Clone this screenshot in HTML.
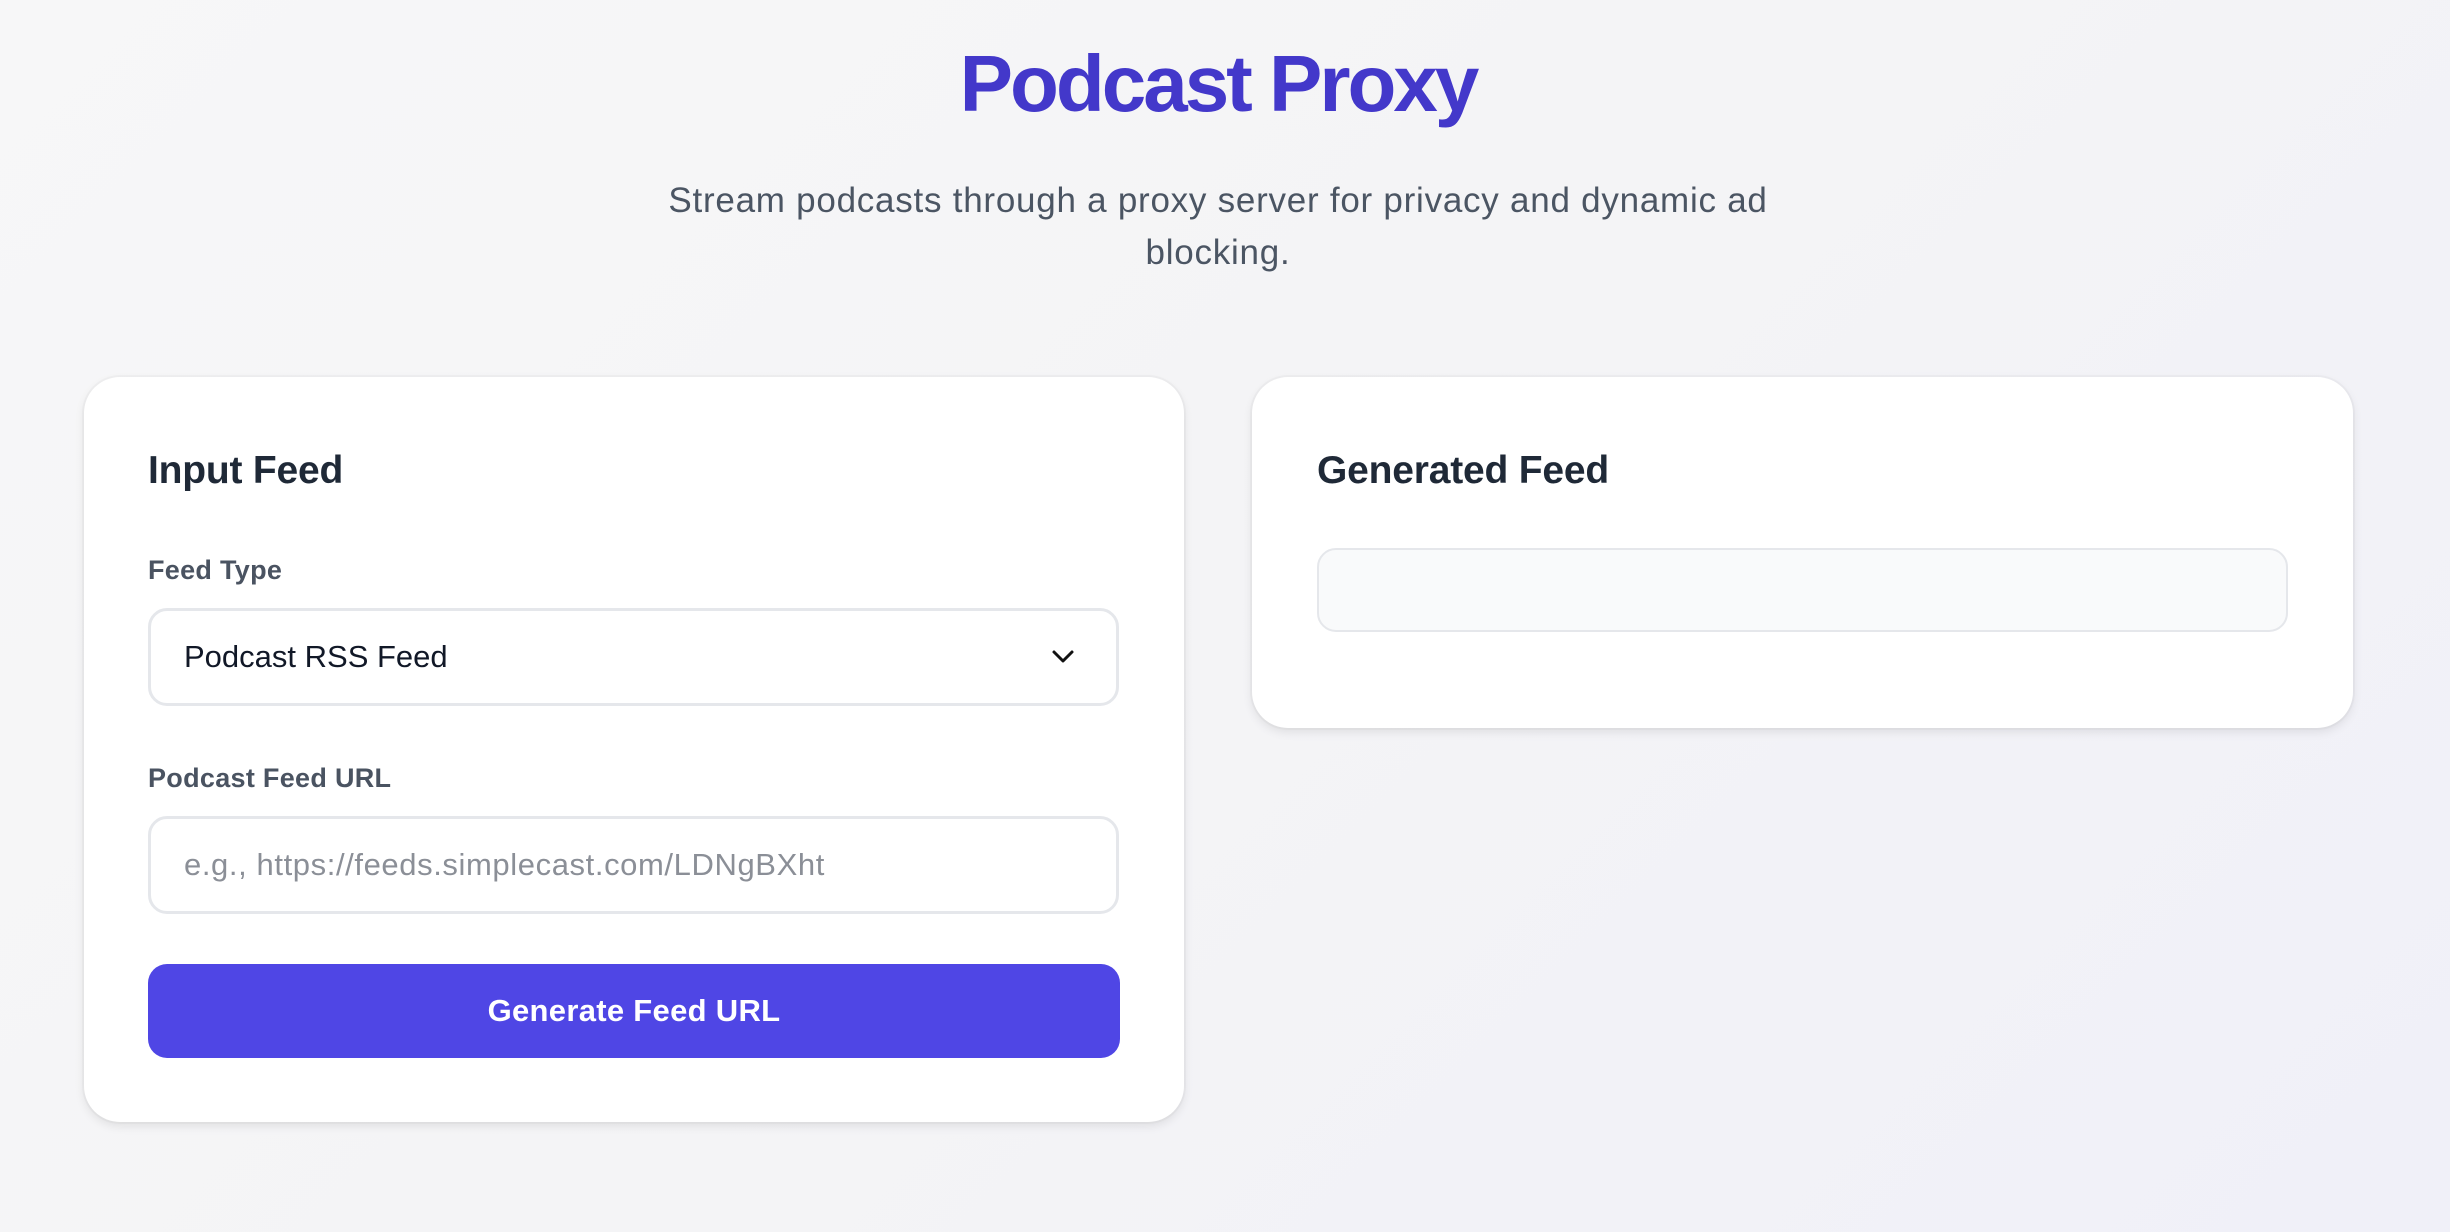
<!DOCTYPE html>
<html><head><meta charset="utf-8"><style>
*{box-sizing:border-box;margin:0;padding:0}
html,body{width:2450px;height:1232px;overflow:hidden}
body{font-family:"Liberation Sans",sans-serif;background:linear-gradient(135deg,#f7f7f8 0%,#f4f4f6 50%,#f0f0f8 100%);position:relative}
h1{position:absolute;left:-7px;width:2450px;top:37px;text-align:center;font-size:80px;font-weight:700;color:#4338ca;letter-spacing:-3px;line-height:94px}
.sub{position:absolute;left:-7px;width:2450px;top:175px;text-align:center;font-size:35px;line-height:52px;color:#4b5563;letter-spacing:0.75px}
.card{position:absolute;background:#fff;border-radius:36px;box-shadow:0 4px 10px rgba(0,0,0,.09),0 0 0 2px rgba(0,0,0,.025)}
.t{position:absolute;font-size:39px;font-weight:700;color:#1f2937;letter-spacing:-0.2px}
.lbl{position:absolute;font-size:27px;font-weight:700;color:#374151;opacity:.9;letter-spacing:0.3px}
.box{position:absolute;border:3px solid #e5e7eb;border-radius:19px;background:#fff;font-size:31px;color:#111827;padding-left:33px;display:flex;align-items:center}
.btn{position:absolute;background:#4f46e5;border-radius:19px;color:#fff;font-size:31px;font-weight:700;display:flex;align-items:center;justify-content:center;letter-spacing:0.3px}
</style></head><body>
<h1>Podcast Proxy</h1>
<div class="sub">Stream podcasts through a proxy server for privacy and dynamic ad<br>blocking.</div>

<div class="card" style="left:84px;top:377px;width:1100px;height:745px"></div>
<div class="t" style="left:148px;top:449px">Input Feed</div>
<div class="lbl" style="left:148px;top:555px">Feed Type</div>
<div class="box" style="left:148px;top:608px;width:971px;height:98px">Podcast RSS Feed
<svg style="position:absolute;left:900px;top:38px" width="24" height="16" viewBox="0 0 24 16"><path d="M3 3l9 9 9-9" fill="none" stroke="#111" stroke-width="3" stroke-linecap="round" stroke-linejoin="round"/></svg></div>
<div class="lbl" style="left:148px;top:763px">Podcast Feed URL</div>
<div class="box" style="left:148px;top:816px;width:971px;height:98px;color:#8b8f97;letter-spacing:0.6px">e.g., https://feeds.simplecast.com/LDNgBXht</div>
<div class="btn" style="left:148px;top:964px;width:972px;height:94px">Generate Feed URL</div>

<div class="card" style="left:1252px;top:377px;width:1101px;height:351px"></div>
<div class="t" style="left:1317px;top:449px">Generated Feed</div>
<div class="box" style="left:1317px;top:548px;width:971px;height:84px;background:#f9fafb;border-width:2px"></div>
</body></html>
